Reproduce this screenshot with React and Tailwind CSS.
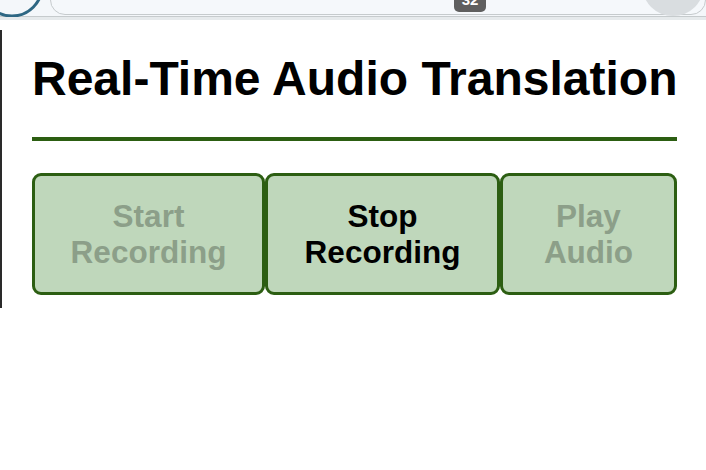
// App.jsx
const buttons = [
  { label: ["Start", "Recording"], width: "w-[233px]", disabled: true },
  { label: ["Stop", "Recording"], width: "w-[235px]", disabled: false },
  { label: ["Play", "Audio"], width: "w-[177px]", disabled: true },
];

const TopBar = () => {
  return (
    <div className="h-[20px] overflow-hidden bg-[#f4f7fa] border-b-[3px] border-[#e6eaec]">
      <div className="flex h-[17px] border-b-[1.5px] border-[#c6cbcd]">
        <svg width="48" height="17" viewBox="0 0 48 17" className="shrink-0">
          <circle cx="12" cy="-14" r="30" fill="none" stroke="#2e6783" strokeWidth="3" />
        </svg>
        <div className="ml-[2px] flex-1 h-[30px] -mt-[15px] rounded-full border-[1.5px] border-[#c6cbcd] bg-[#f5f8fb] flex">
          <div className="ml-[403px] mt-[3px] w-[32px] h-[23px] rounded-[5px] bg-[#5f5f5f] flex items-start justify-center">
            <span className="text-white text-[15px] font-bold leading-[22px] font-['Liberation_Sans',sans-serif]">
              32
            </span>
          </div>
          <div className="ml-auto mr-[1px] w-[62px] h-[62px] -mt-[32px] rounded-full bg-[#d9dde0]"></div>
        </div>
      </div>
    </div>
  );
};

const App = () => {
  return (
    <div className="w-[706px] h-[470px] bg-white font-['Liberation_Sans',Arial,sans-serif]">
      <TopBar />
      <div className="pt-[10px]">
        <div className="border-l-2 border-[#2a2a2a] pl-[30px] pb-[13px]">
          <div className="w-[645px]">
            <h1 className="pt-[21px] text-[48px] font-bold leading-[1.15] text-black whitespace-nowrap">
              Real-Time Audio Translation
            </h1>
            <div className="mt-[31px] h-[4px] bg-[#2c5e12]"></div>
            <div className="mt-[32px] flex">
              {buttons.map((button, index) => (
                <button
                  key={index}
                  disabled={button.disabled}
                  className={`${button.width} h-[122px] shrink-0 rounded-[9px] border-[3px] border-[#2c5e12] bg-[#bfd7bb] flex flex-col items-center justify-center text-[31.5px] font-bold leading-[36px] ${
                    button.disabled ? "text-[#8c9f89]" : "text-black"
                  }`}
                >
                  <span>{button.label[0]}</span>
                  <span>{button.label[1]}</span>
                </button>
              ))}
            </div>
          </div>
        </div>
      </div>
    </div>
  );
};

export default App;
